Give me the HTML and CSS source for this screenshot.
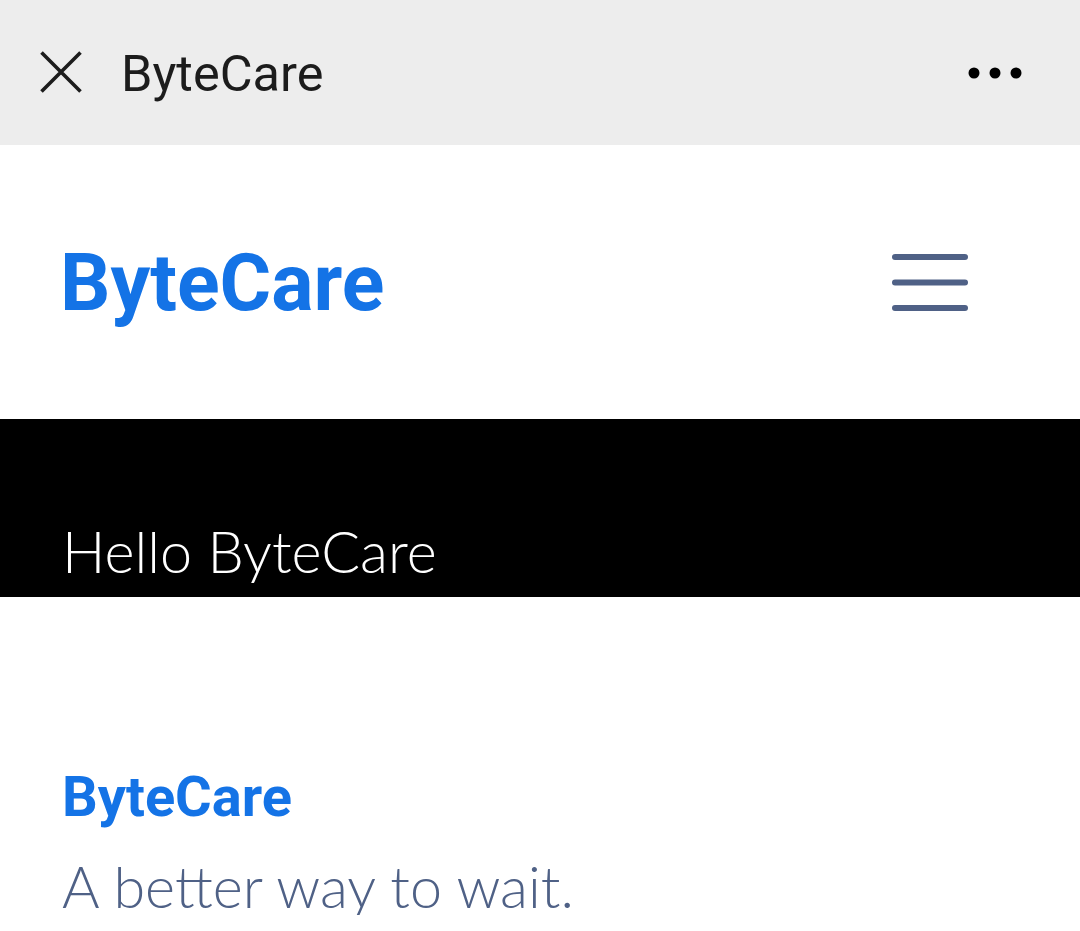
FILE: index.html
```html
<!DOCTYPE html>
<html lang="en">
<head>
<meta charset="utf-8">
<title>ByteCare</title>
<link rel="stylesheet" href="styles.css">
</head>
<body>
<div class="appbar">
  <div class="appbar-left">
    <svg class="close-icon" width="42" height="42" viewBox="0 0 42 42" aria-hidden="true">
      <path d="M1.5 1.5 L40.5 40.5 M40.5 1.5 L1.5 40.5" stroke="#1c1c1c" stroke-width="3.6" fill="none"/>
    </svg>
    <span class="appbar-title">ByteCare</span>
  </div>
  <svg class="more-icon" width="54" height="12" viewBox="0 0 54 12" aria-hidden="true">
    <circle cx="6" cy="6" r="5.5" fill="#000"/>
    <circle cx="27" cy="6" r="5.5" fill="#000"/>
    <circle cx="48" cy="6" r="5.5" fill="#000"/>
  </svg>
</div>
<header class="site-header">
  <div class="logo">ByteCare</div>
  <svg class="burger" width="76" height="57" viewBox="0 0 76 57" aria-hidden="true">
    <line x1="3" y1="3" x2="73" y2="3" stroke="#4f6186" stroke-width="6" stroke-linecap="round"/>
    <line x1="3" y1="28.5" x2="73" y2="28.5" stroke="#4f6186" stroke-width="6" stroke-linecap="round"/>
    <line x1="3" y1="54" x2="73" y2="54" stroke="#4f6186" stroke-width="6" stroke-linecap="round"/>
  </svg>
</header>
<section class="hero">
  <h1 class="hero-title">Hello ByteCare</h1>
</section>
<section class="intro">
  <h2 class="intro-name">ByteCare</h2>
  <p class="intro-tag">A better way to wait.</p>
</section>
</body>
</html>
```
FILE: styles.css
```css
* { box-sizing: border-box; }
html, body { margin: 0; padding: 0; background: #fff; }
body { font-family: Roboto, "Liberation Sans", sans-serif; overflow: hidden; }

.appbar {
  height: 145px;
  background: #ededed;
  display: flex;
  align-items: center;
  justify-content: space-between;
  padding: 0 58px 0 40px;
}
.appbar-left { display: flex; align-items: center; }
.close-icon { display: block; margin-top: -2px; }
.appbar-title {
  margin-left: 39px;
  font-size: 50.5px;
  color: #1c1c1c;
  font-weight: 400;
  line-height: 1;
  margin-top: 4px;
}
.more-icon { display: block; margin-top: 0; }

.site-header {
  height: 274px;
  display: flex;
  align-items: center;
  justify-content: space-between;
  padding: 0 112px 0 60px;
}
.logo {
  font-size: 79px;
  font-weight: 700;
  color: #1473e6;
  line-height: 1;
  margin-top: 2px;
}
.burger { display: block; }

.hero {
  height: 178px;
  background: #000;
  display: flex;
  align-items: flex-end;
  padding: 0 62px 18px;
}
.hero-title {
  margin: 0;
  font-family: Lato, "Open Sans", sans-serif;
  font-weight: 300;
  font-size: 57.5px;
  color: #fff;
  line-height: 1;
}

.intro { padding: 172px 62px 0; }
.intro-name {
  margin: 0;
  font-size: 56px;
  font-weight: 700;
  color: #1473e6;
  line-height: 1;
}
.intro-tag {
  margin: 32px 0 0;
  font-family: Lato, "Open Sans", sans-serif;
  font-weight: 300;
  font-size: 57.5px;
  color: #4f6186;
  line-height: 1;
}
```
